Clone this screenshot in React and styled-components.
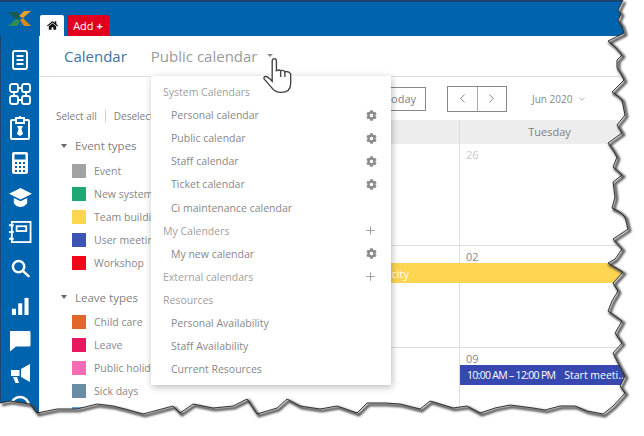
import React from "react";
import styled, { createGlobalStyle } from "styled-components";
import { FaCog, FaHome } from "react-icons/fa";
import { ChevronDown, ChevronLeft, ChevronRight, Plus } from "lucide-react";

const eventTypes = [
  ["Event", "#a3a3a3"],
  ["New system", "#1fa873"],
  ["Team building", "#fdd550"],
  ["User meeting", "#3c55b5"],
  ["Workshop", "#f2051b"],
];
const leaveTypes = [
  ["Child care", "#e2672a"],
  ["Leave", "#e8185f"],
  ["Public holiday", "#f56cb4"],
  ["Sick days", "#6a8da6"],
  ["Vacation", "#5da8dc"],
];
const menu = [
  { label: "System Calendars", head: true },
  { label: "Personal calendar", icon: "gear" },
  { label: "Public calendar", icon: "gear" },
  { label: "Staff calendar", icon: "gear" },
  { label: "Ticket calendar", icon: "gear" },
  { label: "Ci maintenance calendar" },
  { label: "My Calenders", head: true, icon: "plus" },
  { label: "My new calendar", icon: "gear" },
  { label: "External calendars", head: true, icon: "plus" },
  { label: "Resources", head: true },
  { label: "Personal Availability" },
  { label: "Staff Availability" },
  { label: "Current Resources" },
];

const rightEdge =
  "M623,0 L618,10 L621,14 L618,20 L622,26 L624,33 L608,41 L614,46 L622,55 L617,60 L617,68 L621,74 L624,80 L612,92 L618,96 L622,100 L625,115 L617,125 L622,133 L608,143 L613,150 L617,157 L613,167 L622,175 L613,182 L615,197 L612,208 L620,212 L625,217 L628,229 L613,239 L622,249 L615,259 L608,263 L623,272 L613,283 L618,291 L612,301 L608,311 L622,321 L615,333 L622,343 L613,353 L618,363 L625,376 L620,386 L625,393 L613,406 L603,414";
const bottomEdge =
  "L587,411 L575,406 L560,406 L545,410 L533,408 L510,405 L495,408 L480,413 L467,406 L453,408 L440,404 L430,401 L420,409 L400,404 L385,403 L367,403 L357,413 L337,406 L320,409 L300,406 L287,399 L277,408 L257,414 L247,399 L233,406 L213,408 L193,404 L180,413 L173,406 L143,414 L125,409 L113,406 L97,404 L77,409 L57,409 L37,413 L30,404 L10,401 L0,403";

const App = () => {
  return (
    <Page>
      <GlobalStyle />
      <TopBar>
        <LogoSlot>
          <svg width="24" height="16" viewBox="0 0 24 16">
            <path d="M0 1H9L13 6L8 8Z" fill="#1c5a4c" />
            <path d="M0 15L8 8L12 10L9 15Z" fill="#2f8f4e" />
            <path d="M11 5L16 0H23L15 7Z" fill="#e8a02c" />
            <path d="M12 9L15 7L23 15H16Z" fill="#d98a1e" />
          </svg>
        </LogoSlot>
        <Tabs>
          <HomeTab>
            <FaHome size={11} color="#111" />
          </HomeTab>
          <AddTab>
            Add <AddPlus>+</AddPlus>
          </AddTab>
        </Tabs>
      </TopBar>
      <Body>
        <SideNav>
          <NavItem $h={35}>
            <svg width="18" height="22" viewBox="0 0 18 22" fill="none" stroke="#fff" strokeWidth="1.9">
              <rect x="2" y="2" width="14" height="18" rx="2" />
              <path d="M5.5 7H12.5M5.5 11H12.5M5.5 15H12.5" />
            </svg>
          </NavItem>
          <NavItem $h={34}>
            <svg width="24" height="24" viewBox="0 0 24 24" fill="none" stroke="#fff" strokeWidth="1.8">
              <rect x="2" y="2" width="8" height="8" rx="2" />
              <rect x="14" y="2" width="8" height="8" rx="2" />
              <rect x="2" y="14" width="8" height="8" rx="2" />
              <rect x="14" y="14" width="8" height="8" rx="2" />
              <path d="M10 6H14M10 18H14M6 10V14M18 10V14" />
            </svg>
          </NavItem>
          <NavItem $h={34}>
            <svg width="22" height="26" viewBox="0 0 22 26" fill="none" stroke="#fff" strokeWidth="1.9">
              <rect x="2" y="5" width="18" height="19" rx="1" />
              <path d="M7 3H15V8H7Z" fill="#0063ad" />
              <path d="M11 1V3" />
              <path d="M8 11H14L12.5 14L14 19L11 21L8 19L9.5 14Z" fill="#fff" stroke="none" />
            </svg>
          </NavItem>
          <NavItem $h={35}>
            <svg width="18" height="24" viewBox="0 0 18 24">
              <rect x="1" y="1" width="16" height="22" rx="2" fill="#fff" />
              <rect x="3.5" y="3.5" width="11" height="5" fill="#0063ad" />
              <path d="M4 11H6V13H4ZM8 11H10V13H8ZM12 11H14V13H12ZM4 15H6V17H4ZM8 15H10V17H8ZM12 15H14V17H12ZM4 19H6V21H4ZM8 19H10V21H8ZM12 19H14V21H12Z" fill="#0063ad" />
            </svg>
          </NavItem>
          <NavItem $h={34}>
            <svg width="23" height="21" viewBox="0 0 24 22">
              <path d="M12 1L24 7L12 13L0 7Z" fill="#fff" />
              <path d="M5 11.5L12 15L19 11.5V17C17 20 14 21 12 21C10 21 7 20 5 17Z" fill="#fff" />
            </svg>
          </NavItem>
          <NavItem $h={35}>
            <svg width="24" height="24" viewBox="0 0 25 24" fill="none" stroke="#fff" strokeWidth="1.9">
              <rect x="4" y="1.5" width="19.5" height="21" />
              <rect x="9" y="6" width="10" height="5" />
              <path d="M1 5H6M1 12H6M1 19H6" />
            </svg>
          </NavItem>
          <NavItem $h={38}>
            <svg width="19" height="19" viewBox="0 0 20 20" fill="none" stroke="#fff" strokeWidth="2.6">
              <circle cx="8" cy="8" r="6" />
              <path d="M12.5 12.5L18.5 18" strokeLinecap="round" />
            </svg>
          </NavItem>
          <NavItem $h={37}>
            <svg width="18" height="20" viewBox="0 0 20 20" fill="#fff">
              <rect x="1" y="13" width="4.5" height="7" />
              <rect x="8" y="7" width="4.5" height="13" />
              <rect x="15" y="1" width="4.5" height="19" />
            </svg>
          </NavItem>
          <NavItem $h={33}>
            <svg width="22" height="22" viewBox="0 0 22 22" fill="#fff">
              <path d="M2 1H20C21 1 21.5 1.5 21.5 2.5V15C21.5 16 21 16.5 20 16.5H7L1 21.5V2.5C1 1.5 1 1 2 1Z" />
            </svg>
          </NavItem>
          <NavItem $h={32}>
            <svg width="21" height="21" viewBox="0 0 21 21" fill="#fff">
              <path d="M20 1V19L11 14V6Z" />
              <path d="M1 7H9.5V13H1Z" />
              <path d="M3 14H7L9 20H5.5Z" />
            </svg>
          </NavItem>
          <NavItem $h={33}>
            <svg width="22" height="22" viewBox="0 0 22 22" fill="none" stroke="#fff" strokeWidth="2.6">
              <circle cx="11" cy="11" r="9" />
            </svg>
          </NavItem>
        </SideNav>
        <Main>
          <Header>
            <HeaderTitle>Calendar</HeaderTitle>
            <HeaderPicker>Public calendar</HeaderPicker>
            <HeaderCaret />
          </Header>
          <Workspace>
            <FilterPanel>
              <SelectRow>
                <SelectLink>Select all</SelectLink>
                <SelectDivider />
                <SelectLink>Deselect all</SelectLink>
              </SelectRow>
              <FilterGroup>
                <GroupHead>
                  <Caret />
                  Event types
                </GroupHead>
                {eventTypes.map(([label, color]) => (
                  <FilterRow key={label}>
                    <Swatch $color={color} />
                    {label}
                  </FilterRow>
                ))}
              </FilterGroup>
              <FilterGroup>
                <GroupHead>
                  <Caret />
                  Leave types
                </GroupHead>
                {leaveTypes.map(([label, color]) => (
                  <FilterRow key={label}>
                    <Swatch $color={color} />
                    {label}
                  </FilterRow>
                ))}
              </FilterGroup>
            </FilterPanel>
            <CalendarPane>
              <Toolbar>
                <TodayButton>Today</TodayButton>
                <NavGroup>
                  <NavButton>
                    <ChevronLeft size={15} strokeWidth={1.2} />
                  </NavButton>
                  <NavButton>
                    <ChevronRight size={15} strokeWidth={1.2} />
                  </NavButton>
                </NavGroup>
                <MonthLabel>
                  Jun 2020
                  <ChevronDown size={10} strokeWidth={1.5} />
                </MonthLabel>
              </Toolbar>
              <DayHeader>
                <DayName>Monday</DayName>
                <DayName $divider>Tuesday</DayName>
              </DayHeader>
              <WeekRow>
                <DayCell $col={1} />
                <DayCell $col={2} $divider>
                  <DayNumber $muted>26</DayNumber>
                </DayCell>
              </WeekRow>
              <WeekRow>
                <DayCell $col={1} />
                <DayCell $col={2} $divider>
                  <DayNumber>02</DayNumber>
                </DayCell>
                <YellowBar>
                  <YellowLabel>Team outing in the city</YellowLabel>
                </YellowBar>
              </WeekRow>
              <WeekRow>
                <DayCell $col={1} />
                <DayCell $col={2} $divider>
                  <DayNumber>09</DayNumber>
                </DayCell>
                <BlueBar>
                  <BarTime>10:00 AM – 12:00 PM</BarTime>
                  <span>Start meeti..</span>
                </BlueBar>
              </WeekRow>
            </CalendarPane>
          </Workspace>
          <Dropdown>
            {menu.map((item) => (
              <MenuRow key={item.label} $head={item.head}>
                {item.label}
                {item.icon === "gear" && <FaCog size={11} color="#8c8c8c" />}
                {item.icon === "plus" && <Plus size={13} strokeWidth={1.5} color="#8c8c8c" />}
              </MenuRow>
            ))}
          </Dropdown>
        </Main>
      </Body>
      <HandCursor width="32" height="38" viewBox="0 0 30 36">
        <path
          d="M9.5 21V4Q9.5 1.5 11.5 1.5Q13.5 1.5 13.5 4V13Q16 11.5 17.5 13Q20 12 21.5 14Q25 13 27 16V25Q27 33.5 18 33.5Q12 33.5 9 29L2 21Q1 19 3 18.5Q5 18 9.5 23Z"
          fill="#fff"
          stroke="#444"
          strokeWidth="1.3"
        />
        <path d="M17.5 13V19M21.5 14V19" fill="none" stroke="#444" strokeWidth="1.3" />
      </HandCursor>
      <TornEdge width="644" height="436" viewBox="0 0 644 436">
        <defs>
          <filter id="tear-shadow" x="-5%" y="-5%" width="110%" height="110%">
            <feGaussianBlur stdDeviation="1.1" />
          </filter>
        </defs>
        <path d={`${rightEdge} ${bottomEdge} L0,436 L644,436 L644,0 Z`} fill="#fff" />
        <path
          d={`${rightEdge} ${bottomEdge}`}
          transform="translate(2 2)"
          fill="none"
          stroke="#444"
          strokeWidth="2.6"
          filter="url(#tear-shadow)"
        />
        <path d={`${rightEdge} ${bottomEdge}`} fill="none" stroke="#222" strokeWidth="0.9" />
      </TornEdge>
    </Page>
  );
};

export default App;

const GlobalStyle = createGlobalStyle`
  body {
    margin: 0;
    background: #fff;
    font-family: "Open Sans", "Liberation Sans", sans-serif;
  }
`;

const Page = styled.div`
  position: relative;
  width: 644px;
  height: 436px;
  overflow: hidden;
  background: #fff;
`;
const TopBar = styled.div`
  display: flex;
  height: 36px;
  box-sizing: border-box;
  background: #0063ad;
  border-top: 2px solid #1b4470;
`;
const LogoSlot = styled.div`
  width: 40px;
  padding: 8px 0 0 8px;
  box-sizing: border-box;
`;
const Tabs = styled.div`
  display: flex;
  align-items: flex-end;
  gap: 3px;
`;
const HomeTab = styled.div`
  display: flex;
  align-items: center;
  justify-content: center;
  width: 24px;
  height: 21px;
  background: #fff;
  border-radius: 2px 2px 0 0;
`;
const AddTab = styled.div`
  display: flex;
  align-items: center;
  justify-content: center;
  gap: 3px;
  width: 42px;
  height: 21px;
  background: #e2001f;
  border-radius: 2px 2px 0 0;
  color: #fff;
  font-size: 11px;
`;
const AddPlus = styled.span`
  font-weight: 700;
`;
const Body = styled.div`
  display: flex;
  height: 400px;
`;
const SideNav = styled.div`
  display: flex;
  flex-direction: column;
  flex: none;
  width: 39px;
  box-sizing: border-box;
  padding-top: 6px;
  background: #0063ad;
  border-left: 1px solid #1b4470;
`;
const NavItem = styled.div`
  display: flex;
  align-items: center;
  justify-content: center;
  flex: none;
  height: ${(p) => p.$h}px;
`;
const Main = styled.div`
  position: relative;
  flex: 1;
  min-width: 0;
  display: flex;
  flex-direction: column;
`;
const Header = styled.div`
  display: flex;
  align-items: center;
  flex: none;
  height: 41px;
  box-sizing: border-box;
  padding: 0 0 1px 25px;
  border-bottom: 1px solid #dcdcdc;
`;
const HeaderTitle = styled.div`
  font-size: 15px;
  color: #3f729f;
`;
const HeaderPicker = styled.div`
  margin-left: 24px;
  font-size: 15px;
  color: #9a9a9a;
`;
const HeaderCaret = styled.div`
  margin-left: 10px;
  border-left: 3px solid transparent;
  border-right: 3px solid transparent;
  border-top: 3px solid #888;
`;
const Workspace = styled.div`
  display: flex;
  flex: 1;
  min-height: 0;
`;
const FilterPanel = styled.div`
  flex: none;
  width: 240px;
  box-sizing: border-box;
  padding: 27px 0 0 17px;
`;
const SelectRow = styled.div`
  display: flex;
  align-items: center;
  gap: 8px;
  height: 23px;
  font-size: 10px;
  color: #808080;
`;
const SelectLink = styled.span`
  white-space: nowrap;
`;
const SelectDivider = styled.span`
  width: 1px;
  height: 12px;
  background: #ccc;
`;
const FilterGroup = styled.div`
  margin-top: 7px;
  & + & {
    margin-top: 11.5px;
  }
`;
const GroupHead = styled.div`
  display: flex;
  align-items: center;
  height: 25px;
  box-sizing: border-box;
  padding: 0 0 2px 5px;
  font-size: 11.5px;
  color: #808080;
`;
const Caret = styled.span`
  margin-right: 8px;
  border-left: 3px solid transparent;
  border-right: 3px solid transparent;
  border-top: 4px solid #666;
`;
const FilterRow = styled.div`
  display: flex;
  align-items: center;
  gap: 8px;
  height: 23px;
  padding-left: 16px;
  font-size: 10.5px;
  color: #888;
  white-space: nowrap;
`;
const Swatch = styled.span`
  width: 14px;
  height: 14px;
  flex: none;
  background: ${(p) => p.$color};
`;
const CalendarPane = styled.div`
  flex: 1;
  min-width: 0;
`;
const Toolbar = styled.div`
  display: flex;
  align-items: center;
  height: 43px;
  padding-left: 96px;
`;
const TodayButton = styled.div`
  display: flex;
  align-items: center;
  justify-content: center;
  width: 51px;
  height: 24px;
  box-sizing: border-box;
  border: 1px solid #888;
  font-size: 11px;
  color: #808080;
`;
const NavGroup = styled.div`
  display: flex;
  margin-left: 21px;
  border: 1px solid #888;
`;
const NavButton = styled.div`
  display: flex;
  align-items: center;
  justify-content: center;
  width: 28.5px;
  height: 24px;
  color: #666;
  & + & {
    border-left: 1px solid #aaa;
  }
`;
const MonthLabel = styled.div`
  display: flex;
  align-items: center;
  gap: 5px;
  margin-left: 25px;
  font-size: 10px;
  color: #888;
  white-space: nowrap;
`;
const DayHeader = styled.div`
  display: grid;
  grid-template-columns: 180px 180px;
  height: 24px;
  background: #ededed;
`;
const DayName = styled.div`
  display: flex;
  align-items: center;
  justify-content: center;
  box-sizing: border-box;
  padding-bottom: 2px;
  font-size: 11px;
  color: #808080;
  ${(p) => p.$divider && "border-left: 1px solid #dcdcdc;"}
`;
const WeekRow = styled.div`
  display: grid;
  grid-template-columns: 180px 180px;
  grid-template-rows: 17px 20px 1fr;
  height: 102px;
  box-sizing: border-box;
  border-bottom: 1px solid #dcdcdc;
  &:last-child {
    border-bottom: 0;
  }
`;
const DayCell = styled.div`
  grid-row: 1 / -1;
  grid-column: ${(p) => p.$col};
  ${(p) => p.$divider && "border-left: 1px solid #dcdcdc;"}
`;
const DayNumber = styled.div`
  padding: 3px 0 0 6px;
  font-size: 11px;
  line-height: 16px;
  color: ${(p) => (p.$muted ? "#c8c8c8" : "#8a8a8a")};
`;
const YellowBar = styled.div`
  grid-row: 2;
  grid-column: 1 / -1;
  display: flex;
  align-items: center;
  background: #fdd550;
`;
const YellowLabel = styled.div`
  width: 130px;
  font-size: 11px;
  color: #fff;
  text-align: right;
  white-space: nowrap;
  direction: rtl;
  overflow: hidden;
`;
const BlueBar = styled.div`
  grid-row: 2;
  grid-column: 2;
  display: flex;
  align-items: center;
  gap: 9px;
  margin-left: 1px;
  padding-left: 7px;
  background: #3749b0;
  font-size: 10.5px;
  color: #fff;
  white-space: nowrap;
  overflow: hidden;
`;
const BarTime = styled.span`
  letter-spacing: -0.7px;
`;
const Dropdown = styled.div`
  position: absolute;
  left: 112px;
  top: 40px;
  width: 240px;
  height: 309px;
  box-sizing: border-box;
  padding-top: 4.5px;
  background: #fff;
  box-shadow: 1px 2px 7px rgba(0, 0, 0, 0.28);
`;
const MenuRow = styled.div`
  display: flex;
  align-items: center;
  justify-content: space-between;
  height: 23.1px;
  padding: 0 14px 0 ${(p) => (p.$head ? 12 : 20)}px;
  font-size: 10.5px;
  color: ${(p) => (p.$head ? "#a0a0a0" : "#888")};
`;
const HandCursor = styled.svg`
  position: absolute;
  left: 262px;
  top: 57px;
`;
const TornEdge = styled.svg`
  position: absolute;
  left: 0;
  top: 0;
  pointer-events: none;
`;
